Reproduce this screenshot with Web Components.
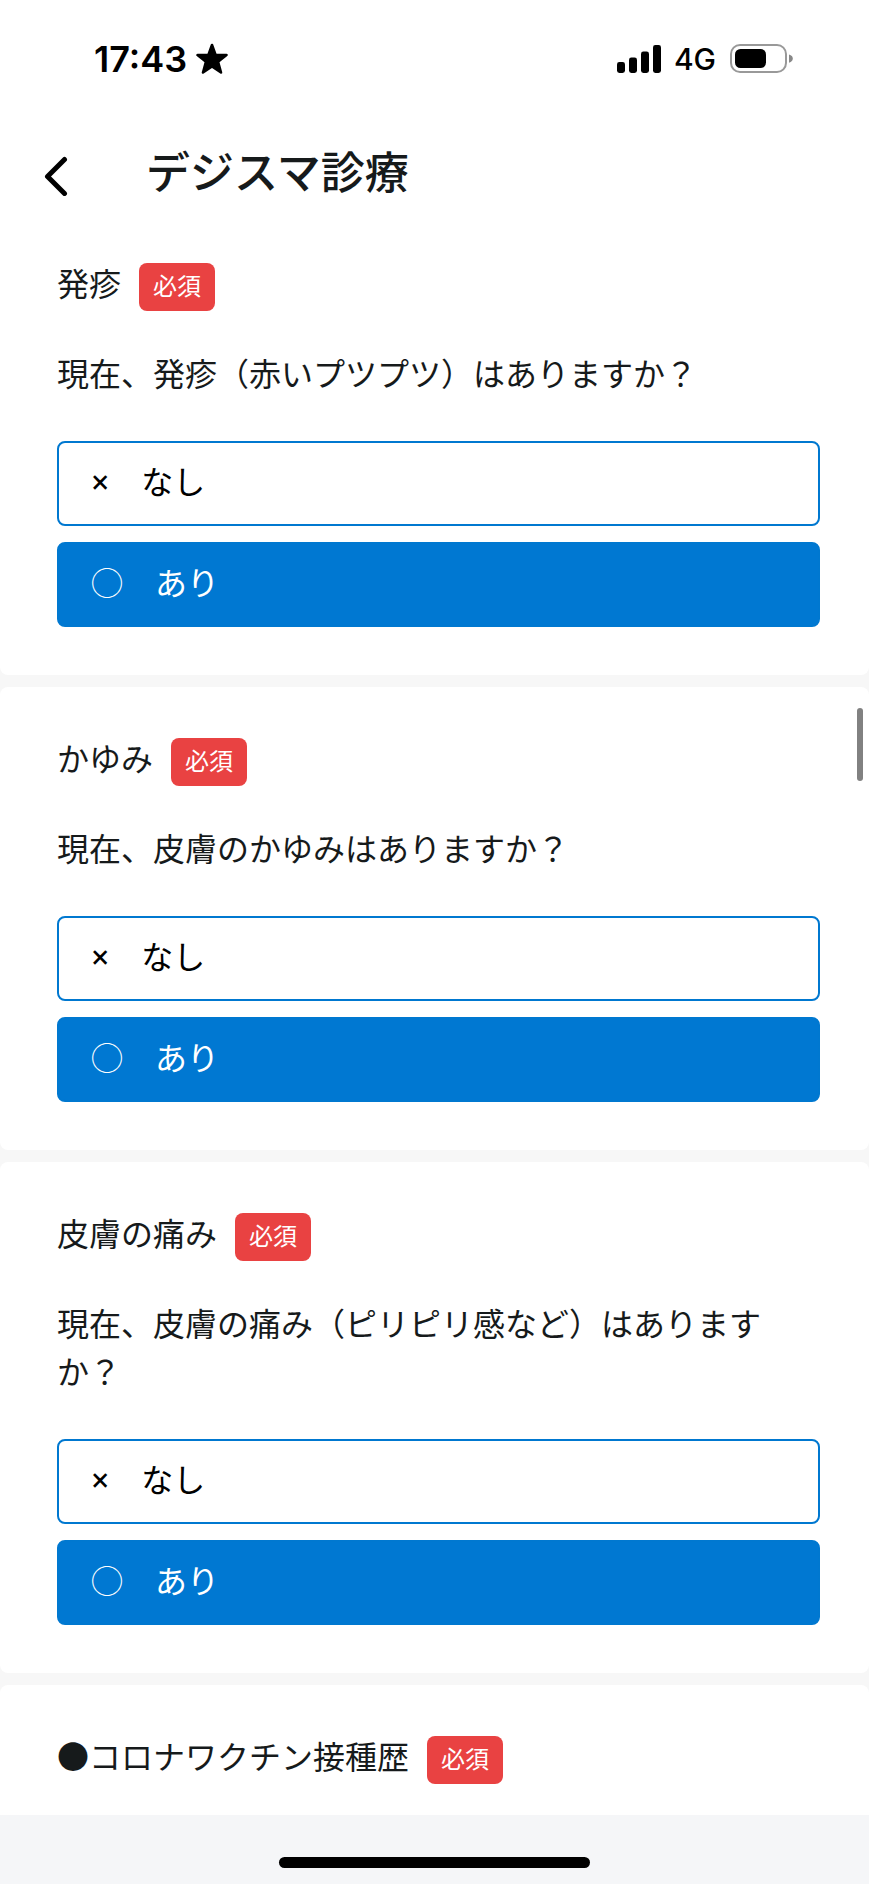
<!DOCTYPE html>
<html lang="ja">
<head>
<meta charset="utf-8">
<meta name="viewport" content="width=device-width, initial-scale=1">
<title>デジスマ診療</title>
<style>
  body { margin: 0; background: #fff; color: #161a1b; font: 32px/48px "Noto Sans CJK JP", sans-serif; }
</style>
</head>
<body>
<medical-app>
  <status-bar slot="top" time="17:43" network="4G"></status-bar>
  <page-header slot="top">デジスマ診療</page-header>
  <question-card heading="発疹" continued>現在、発疹（赤いプツプツ）はありますか？
    <choice-list slot="choices"></choice-list>
  </question-card>
  <question-card heading="かゆみ">現在、皮膚のかゆみはありますか？
    <choice-list slot="choices"></choice-list>
  </question-card>
  <question-card heading="皮膚の痛み">現在、皮膚の痛み（ピリピリ感など）はありますか？
    <choice-list slot="choices"></choice-list>
  </question-card>
  <question-card heading="●コロナワクチン接種歴" collapsed></question-card>
  <home-indicator slot="bottom"></home-indicator>
</medical-app>

<script>
class BaseElement extends HTMLElement {
  render(html) {
    const template = document.createElement('template');
    template.innerHTML = html;
    this.attachShadow({ mode: 'open' }).append(template.content.cloneNode(true));
  }
}

customElements.define('medical-app', class extends BaseElement {
  connectedCallback() {
    this.render(`
      <style>
        :host { display: flex; flex-direction: column; min-height: 100vh; position: relative; }
        main { display: flex; flex-direction: column; flex: 1; gap: 12px; background: #f7f7f7; }
        .thumb { position: absolute; top: 708px; right: 6px; width: 6px; height: 73px; border-radius: 3px; background: #818181; }
      </style>
      <slot name="top"></slot>
      <main><slot></slot></main>
      <slot name="bottom"></slot>
      <div class="thumb"></div>`);
  }
});

customElements.define('status-bar', class extends BaseElement {
  connectedCallback() {
    this.render(`
      <style>
        :host { display: flex; align-items: center; justify-content: space-between; height: 118px; padding: 0 76px 0 94px; color: #000; font-family: Inter, sans-serif; background: #fff; }
        div { display: flex; align-items: center; }
        svg { display: block; }
        .time { font-size: 36px; font-weight: 600; gap: 8px; }
        .net { font-size: 30px; font-weight: 500; }
        .signal { margin-right: 12px; }
        .battery { margin-left: 14px; }
      </style>
      <div class="time"><span>${this.getAttribute('time')}</span>
        <svg width="34" height="32" viewBox="0 0 34 32" aria-hidden="true"><path d="M17 2 20.6 12H31.5L23 18.7 26 29.5 17 23.5 8 29.5 11 18.7 2.5 12H13.4Z" stroke="#000" stroke-width="2.6" stroke-linejoin="round"/></svg>
      </div>
      <div class="net">
        <svg class="signal" width="45" height="28" viewBox="0 0 45 28" aria-hidden="true"><rect x="0" y="17" width="8" height="11" rx="2.4"/><rect x="12" y="12.5" width="8" height="15.5" rx="2.4"/><rect x="24" y="6.5" width="8" height="21.5" rx="2.4"/><rect x="36" y="0" width="8" height="28" rx="2.4"/></svg>
        <span>${this.getAttribute('network')}</span>
        <svg class="battery" width="63" height="30" viewBox="0 0 63 30" aria-hidden="true"><rect x="1" y="1" width="55" height="27" rx="9" fill="none" stroke="#999" stroke-width="2"/><rect x="5" y="5" width="31" height="19" rx="5.5"/><path d="M59 10.5Q62.8 11.5 62.8 14.5T59 18.8Z" fill="#888"/></svg>
      </div>`);
  }
});

customElements.define('page-header', class extends BaseElement {
  connectedCallback() {
    this.render(`
      <style>
        :host { display: flex; align-items: flex-start; gap: 66px; box-sizing: border-box; height: 94px; padding: 20px 44px 0 32px; background: #fff; }
        button { display: flex; align-items: flex-end; justify-content: center; width: 48px; height: 58px; padding: 0; border: 0; background: none; color: #000; }
        h1 { margin: 0; font-size: 44px; line-height: 64px; font-weight: 500; }
      </style>
      <button type="button" aria-label="戻る"><svg width="24" height="40" viewBox="0 0 24 40" aria-hidden="true"><path d="M20.5 3.5 3.5 20.5 20.5 37.5" fill="none" stroke="currentColor" stroke-width="5" stroke-linecap="round" stroke-linejoin="round"/></svg></button>
      <h1><slot></slot></h1>`);
  }
});

customElements.define('question-card', class extends BaseElement {
  connectedCallback() {
    const collapsed = this.hasAttribute('collapsed');
    this.render(`
      <style>
        :host { display: block; background: #fff; border-radius: 8px; padding: 46px 49px 48px 57px; }
        :host([continued]) { border-radius: 0 0 8px 8px; }
        :host([collapsed]) { flex: 1; padding-bottom: 30px; border-radius: 8px 8px 0 0; }
        header { display: flex; align-items: flex-start; gap: 18px; }
        h2 { margin: 0; font-size: 32px; line-height: 48px; font-weight: 400; }
        required-badge { margin-top: 5px; }
        p { margin: 37px 0 45px; }
      </style>
      <header><h2>${this.getAttribute('heading')}</h2><required-badge>必須</required-badge></header>
      ${collapsed ? '' : '<p><slot></slot></p><slot name="choices"></slot>'}`);
  }
});

customElements.define('required-badge', class extends BaseElement {
  connectedCallback() {
    this.render(`
      <style>
        :host { display: block; padding: 0 14px 4px; border-radius: 8px; background: #e94242; color: #fff; font-size: 24px; line-height: 44px; }
      </style>
      <slot></slot>`);
  }
});

customElements.define('choice-list', class extends BaseElement {
  connectedCallback() {
    this.render(`
      <style>
        :host { display: flex; flex-direction: column; gap: 16px; }
        button { box-sizing: border-box; width: 100%; height: 85px; padding: 0 32px 8px; border: 2px solid #0078d0; border-radius: 8px; background: #fff; color: #000; font: inherit; text-align: left; }
        button[aria-pressed="true"] { background: #0078d2; color: #fff; }
        .cross { font-family: "Noto Sans", sans-serif; font-weight: 500; line-height: 1; }
      </style>
      <button type="button" aria-pressed="false"><span class="cross">×</span>　なし</button>
      <button type="button" aria-pressed="true">◯　あり</button>`);
    const buttons = this.shadowRoot.querySelectorAll('button');
    buttons.forEach(button => button.addEventListener('click', () => {
      buttons.forEach(other => other.setAttribute('aria-pressed', String(other === button)));
    }));
  }
});

customElements.define('home-indicator', class extends BaseElement {
  connectedCallback() {
    this.render(`
      <style>
        :host { display: flex; justify-content: center; padding: 42px 0 16px; background: #f5f6f8; }
        div { width: 311px; height: 11px; border-radius: 6px; background: #000; }
      </style>
      <div></div>`);
  }
});
</script>
</body>
</html>
